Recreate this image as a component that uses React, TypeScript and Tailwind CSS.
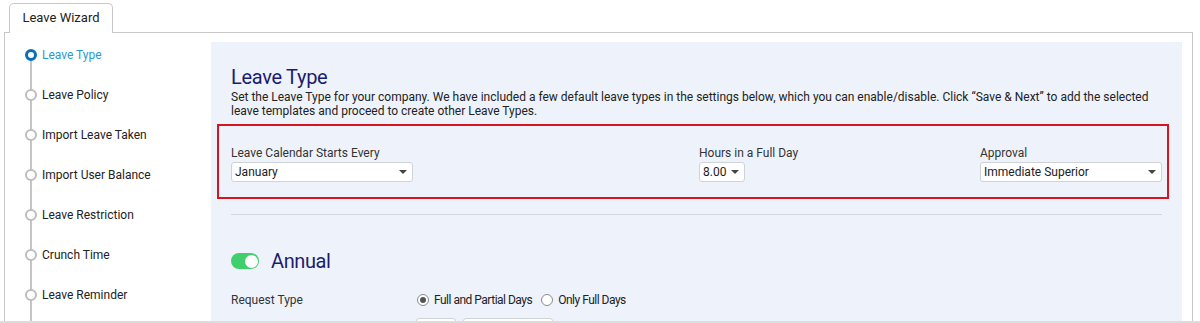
import React from "react";

const steps = [
  "Leave Type",
  "Leave Policy",
  "Import Leave Taken",
  "Import User Balance",
  "Leave Restriction",
  "Crunch Time",
  "Leave Reminder",
];

function Caret() {
  return <span className="w-0 h-0 border-x-[4px] border-x-transparent border-t-[4px] border-t-[#444]" />;
}

function Select({ value, width }: { value: string; width: string }) {
  return (
    <div className={`${width} h-[20px] bg-white border border-[#cfd3d8] rounded-[3px] flex items-center justify-between pl-[3px] pr-[5px] text-[12px] text-[#222]`}>
      <span>{value}</span>
      <Caret />
    </div>
  );
}

function Radio({ checked }: { checked?: boolean }) {
  return (
    <span className="w-[12px] h-[12px] rounded-full border border-[#8a8a8a] bg-white flex items-center justify-center">
      {checked && <span className="w-[6px] h-[6px] rounded-full bg-[#555]" />}
    </span>
  );
}

export default function App() {
  return (
    <div className="w-[1200px] h-[323px] bg-white overflow-hidden font-[Roboto,sans-serif] text-[#222] flex flex-col">
      <div className="flex-1 min-h-0 flex flex-col overflow-hidden">
        {/* Tab */}
        <div className="pl-[9px] pt-[3px] flex relative z-10">
          <div className="h-[30px] w-[104px] border border-b-0 border-[#c8c8c8] rounded-t-[5px] bg-white flex items-center justify-center text-[13px] text-[#222] -mb-[1px] pb-[1px]">
            Leave Wizard
          </div>
        </div>
        {/* Panel */}
        <div className="ml-[4px] w-[1189px] flex-1 border border-b-0 border-[#c8c8c8] flex">
          {/* Sidebar */}
          <div className="w-[206px] pt-[2px] relative">
            <div className="absolute left-[25px] top-[22px] bottom-0 w-[2px] bg-[#c6c6c6]" />
            {steps.map((s, i) => (
              <div key={s} className="h-[40px] flex items-center pl-[20px] relative">
                {i === 0 ? (
                  <span className="w-[12px] h-[12px] rounded-full border-[3px] border-[#0b6fb8] bg-white" />
                ) : (
                  <span className="w-[12px] h-[12px] rounded-full border-[2px] border-[#bdbdbd] bg-white" />
                )}
                <span className={`ml-[5px] text-[12px] ${i === 0 ? "text-[#2a9ad6]" : "text-[#222]"}`}>{s}</span>
              </div>
            ))}
          </div>
          {/* Content */}
          <div className="mt-[9px] w-[971px] bg-[#eef3fb] px-[20px] pt-[23px] flex flex-col">
            <h1 className="text-[20px] leading-[24px] text-[#1c1c6e] tracking-[-0.3px]">Leave Type</h1>
            <p className="mt-[1px] text-[12px] leading-[14px] text-[#222] pr-[10px]">
              Set the Leave Type for your company. We have included a few default leave types in the settings below, which you can enable/disable. Click “Save &amp; Next” to add the selected leave templates and proceed to create other Leave Types.
            </p>
            <div className="mt-[6px] -ml-[14px] w-[952px] h-[75px] border-2 border-[#d7141f] pl-[12px] pt-[20px] flex">
              <div className="w-[468px] flex flex-col">
                <span className="text-[12px] leading-[14px] text-[#333]">Leave Calendar Starts Every</span>
                <div className="mt-[2px]"><Select value="January" width="w-[182px]" /></div>
              </div>
              <div className="w-[281px] flex flex-col">
                <span className="text-[12px] leading-[14px] text-[#333]">Hours in a Full Day</span>
                <div className="mt-[2px]"><Select value="8.00" width="w-[46px]" /></div>
              </div>
              <div className="flex flex-col">
                <span className="text-[12px] leading-[14px] text-[#333]">Approval</span>
                <div className="mt-[2px]"><Select value="Immediate Superior" width="w-[182px]" /></div>
              </div>
            </div>
            <div className="mt-[15px] h-[1px] w-[931px] bg-[#d3d8df]" />
            <div className="mt-[34px] h-[24px] flex items-center">
              <div className="w-[28px] h-[16px] rounded-full bg-[#3fcf6c] flex items-center justify-end pr-[1.5px]">
                <span className="w-[13px] h-[13px] rounded-full bg-white" />
              </div>
              <span className="ml-[12px] text-[20px] leading-[24px] text-[#1c1c6e] tracking-[-0.4px]">Annual</span>
            </div>
            <div className="mt-[20px] h-[14px] flex items-center text-[12px] leading-[14px]">
              <span className="w-[186px] text-[#333]">Request Type</span>
              <Radio checked />
              <span className="ml-[5px] tracking-[-0.5px]">Full and Partial Days</span>
              <span className="ml-[9px]"><Radio /></span>
              <span className="ml-[5px] tracking-[-0.5px]">Only Full Days</span>
            </div>
            <div className="mt-[11px] flex pl-[185px] gap-[7px]">
              <div className="w-[40px] h-[22px] bg-white border border-[#cfd3d8] rounded-[3px]" />
              <div className="w-[90px] h-[22px] bg-white border border-[#cfd3d8] rounded-[3px]" />
            </div>
          </div>
        </div>
      </div>
      <div className="h-[2px] bg-[#dcdcdc]" />
    </div>
  );
}
